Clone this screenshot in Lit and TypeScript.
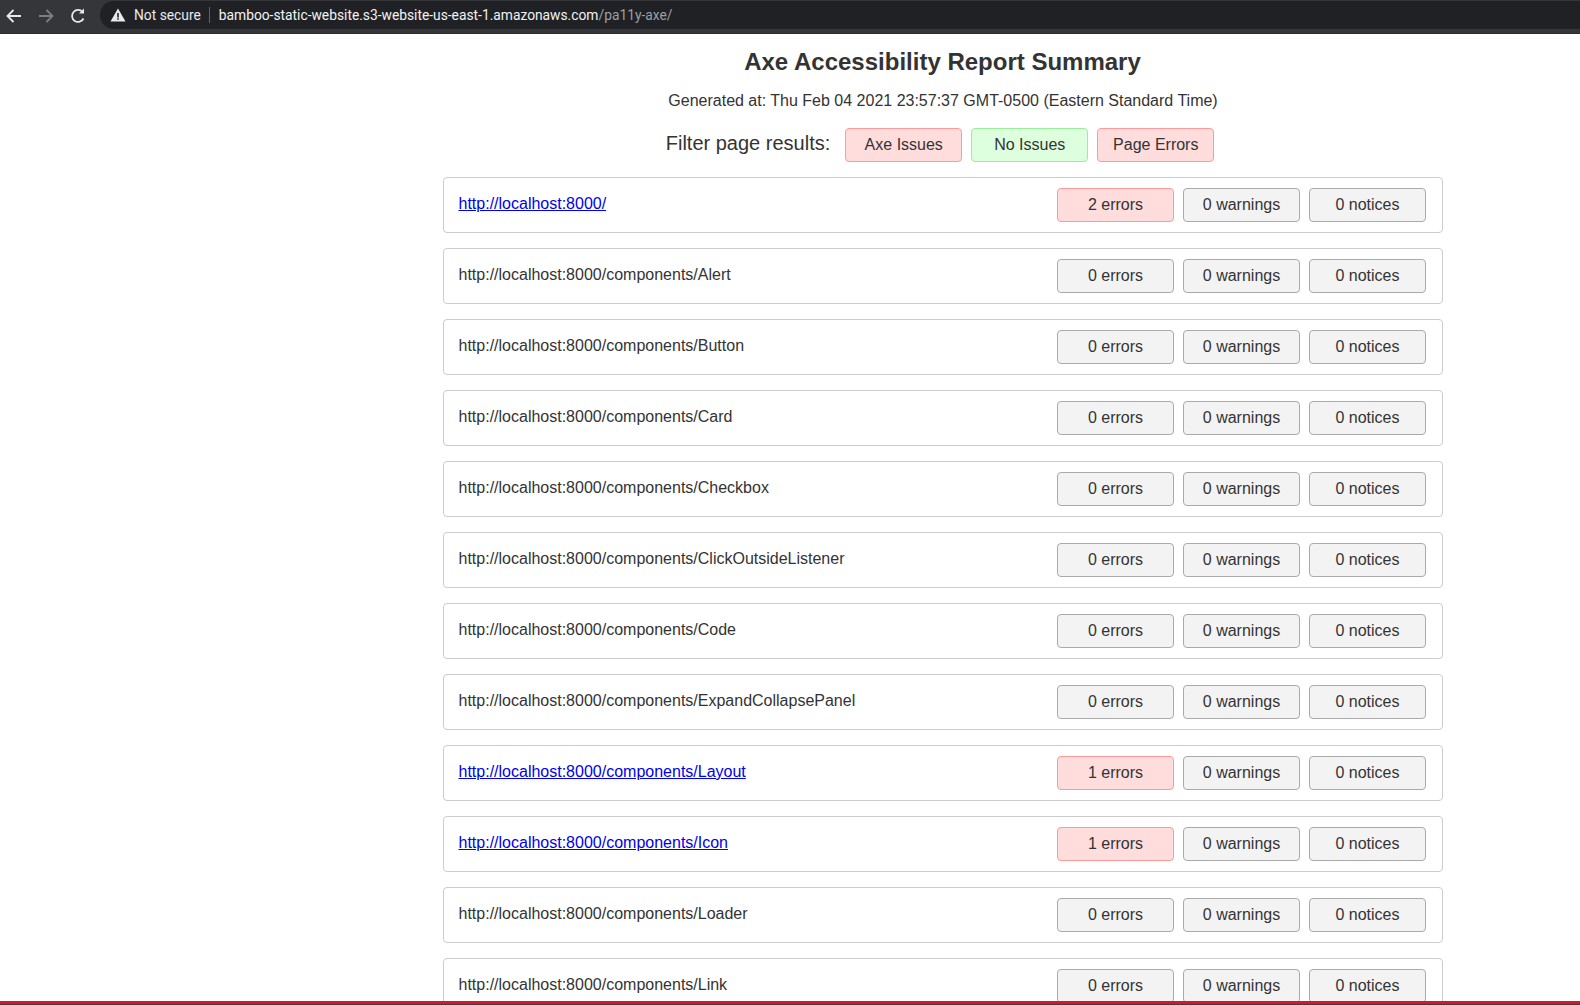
import { LitElement, css, html } from "lit";
import { customElement } from "lit/decorators.js";

interface PageResult {
  url: string;
  errors: number;
}

const PAGES: PageResult[] = [
  { url: "http://localhost:8000/", errors: 2 },
  { url: "http://localhost:8000/components/Alert", errors: 0 },
  { url: "http://localhost:8000/components/Button", errors: 0 },
  { url: "http://localhost:8000/components/Card", errors: 0 },
  { url: "http://localhost:8000/components/Checkbox", errors: 0 },
  { url: "http://localhost:8000/components/ClickOutsideListener", errors: 0 },
  { url: "http://localhost:8000/components/Code", errors: 0 },
  { url: "http://localhost:8000/components/ExpandCollapsePanel", errors: 0 },
  { url: "http://localhost:8000/components/Layout", errors: 1 },
  { url: "http://localhost:8000/components/Icon", errors: 1 },
  { url: "http://localhost:8000/components/Loader", errors: 0 },
  { url: "http://localhost:8000/components/Link", errors: 0 },
];

@customElement("app-root")
export class AppRoot extends LitElement {
  static styles = css`
    :host {
      position: relative;
      display: block;
      height: 1005px;
      overflow: hidden;
      background: #fff;
      color: #333;
      font-family: "Liberation Sans", Arial, sans-serif;
      font-size: 16px;
    }

    .toolbar {
      display: flex;
      height: 34px;
      box-sizing: border-box;
      padding-top: 1px;
      border-bottom: 1px solid #2a2b2e;
      background: #35363a;
    }

    .nav {
      display: flex;
      align-items: center;
      gap: 12px;
      width: 100px;
      height: 29px;
      padding-left: 4px;
      box-sizing: border-box;
      flex: none;
    }

    .nav svg {
      display: block;
      width: 20px;
      height: 20px;
    }

    .omnibox {
      flex: 1;
      display: flex;
      align-items: center;
      height: 28px;
      padding-left: 10px;
      border-radius: 14px 0 0 14px;
      background: #202124;
      font-family: Roboto, "Liberation Sans", sans-serif;
      font-size: 13.8px;
      white-space: nowrap;
    }

    .omnibox svg {
      width: 16px;
      height: 16px;
      flex: none;
    }

    .not-secure {
      margin-left: 8px;
      padding-right: 8px;
      border-right: 1px solid #5f6368;
      color: #e8eaed;
      line-height: 16px;
    }

    .host-name {
      margin-left: 9px;
      color: #f1f3f4;
    }

    .path {
      color: #9aa0a6;
    }

    main {
      width: 1000px;
      margin-left: 443px;
    }

    h1 {
      margin: 0;
      padding-top: 14px;
      padding-right: 1px;
      font-size: 24px;
      line-height: 28px;
      font-weight: 700;
      text-align: center;
    }

    .generated {
      margin: 16px 0 0;
      line-height: 18px;
      text-align: center;
    }

    .filters {
      display: flex;
      justify-content: center;
      align-items: center;
      gap: 9px;
      margin: 18px 6px 15px 0;
    }

    .filters .label {
      margin-right: 6px;
      font-size: 20px;
      line-height: 30px;
      position: relative;
      top: -2px;
    }

    .badge {
      display: flex;
      align-items: center;
      justify-content: center;
      width: 117px;
      height: 34px;
      box-sizing: border-box;
      border: 1px solid #aaa;
      border-radius: 4px;
      background: #f3f3f3;
      line-height: 18px;
    }

    .badge.bad {
      border-color: #ff9999;
      background: #ffdddd;
    }

    .badge.good {
      border-color: #99ee99;
      background: #ddffdd;
    }

    .rows {
      display: flex;
      flex-direction: column;
      gap: 15px;
    }

    .row {
      display: flex;
      align-items: flex-start;
      justify-content: space-between;
      height: 56px;
      box-sizing: border-box;
      padding: 10px 16px 0 15px;
      border: 1px solid #ccc;
      border-radius: 4px;
    }

    .url {
      padding-top: 2px;
      margin-left: -0.5px;
      line-height: 28px;
    }

    .url a {
      color: #0000ee;
    }

    .counts {
      display: flex;
      gap: 9px;
    }

    .bottom-line {
      position: absolute;
      left: 0;
      right: 0;
      bottom: 0;
      height: 3px;
      background: #d8152a;
      border-bottom: 1px solid #3c3d41;
    }
  `;

  private renderRow(page: PageResult) {
    return html`
      <div class="row">
        <div class="url">
          ${page.errors > 0 ? html`<a href="#">${page.url}</a>` : page.url}
        </div>
        <div class="counts">
          <div class="badge ${page.errors > 0 ? "bad" : ""}">${page.errors} errors</div>
          <div class="badge">0 warnings</div>
          <div class="badge">0 notices</div>
        </div>
      </div>
    `;
  }

  render() {
    return html`
      <div class="toolbar">
        <div class="nav">
          <svg viewBox="0 0 20 20" fill="none" stroke="#e8eaed" stroke-width="1.8">
            <path d="M17 10H4M9.5 4 3.5 10l6 6" />
          </svg>
          <svg viewBox="0 0 20 20" fill="none" stroke="#7c7e82" stroke-width="1.8">
            <path d="M3 10h13M10.5 4l6 6-6 6" />
          </svg>
          <svg viewBox="0 0 20 20" fill="none" stroke="#e8eaed" stroke-width="1.8">
            <path d="M15.5 12.5A6 6 0 1 1 14.6 6" />
            <path d="M16 2.5V7.5H11" fill="#e8eaed" stroke="none" />
          </svg>
        </div>
        <div class="omnibox">
          <svg viewBox="0 0 16 16"><path d="M8 1.5 15.5 14.5H.5Z" fill="#e8eaed" /><path d="M7.2 6h1.6v4.4H7.2zM7.2 11.2h1.6v1.6H7.2z" fill="#202124" /></svg>
          <span class="not-secure">Not secure</span>
          <span class="host-name">bamboo-static-website.s3-website-us-east-1.amazonaws.com<span class="path">/pa11y-axe/</span></span>
        </div>
      </div>
      <main>
        <h1>Axe Accessibility Report Summary</h1>
        <p class="generated">Generated at: Thu Feb 04 2021 23:57:37 GMT-0500 (Eastern Standard Time)</p>
        <div class="filters">
          <span class="label">Filter page results:</span>
          <div class="badge bad">Axe Issues</div>
          <div class="badge good">No Issues</div>
          <div class="badge bad">Page Errors</div>
        </div>
        <div class="rows">${PAGES.map((page) => this.renderRow(page))}</div>
      </main>
      <div class="bottom-line"></div>
    `;
  }
}
